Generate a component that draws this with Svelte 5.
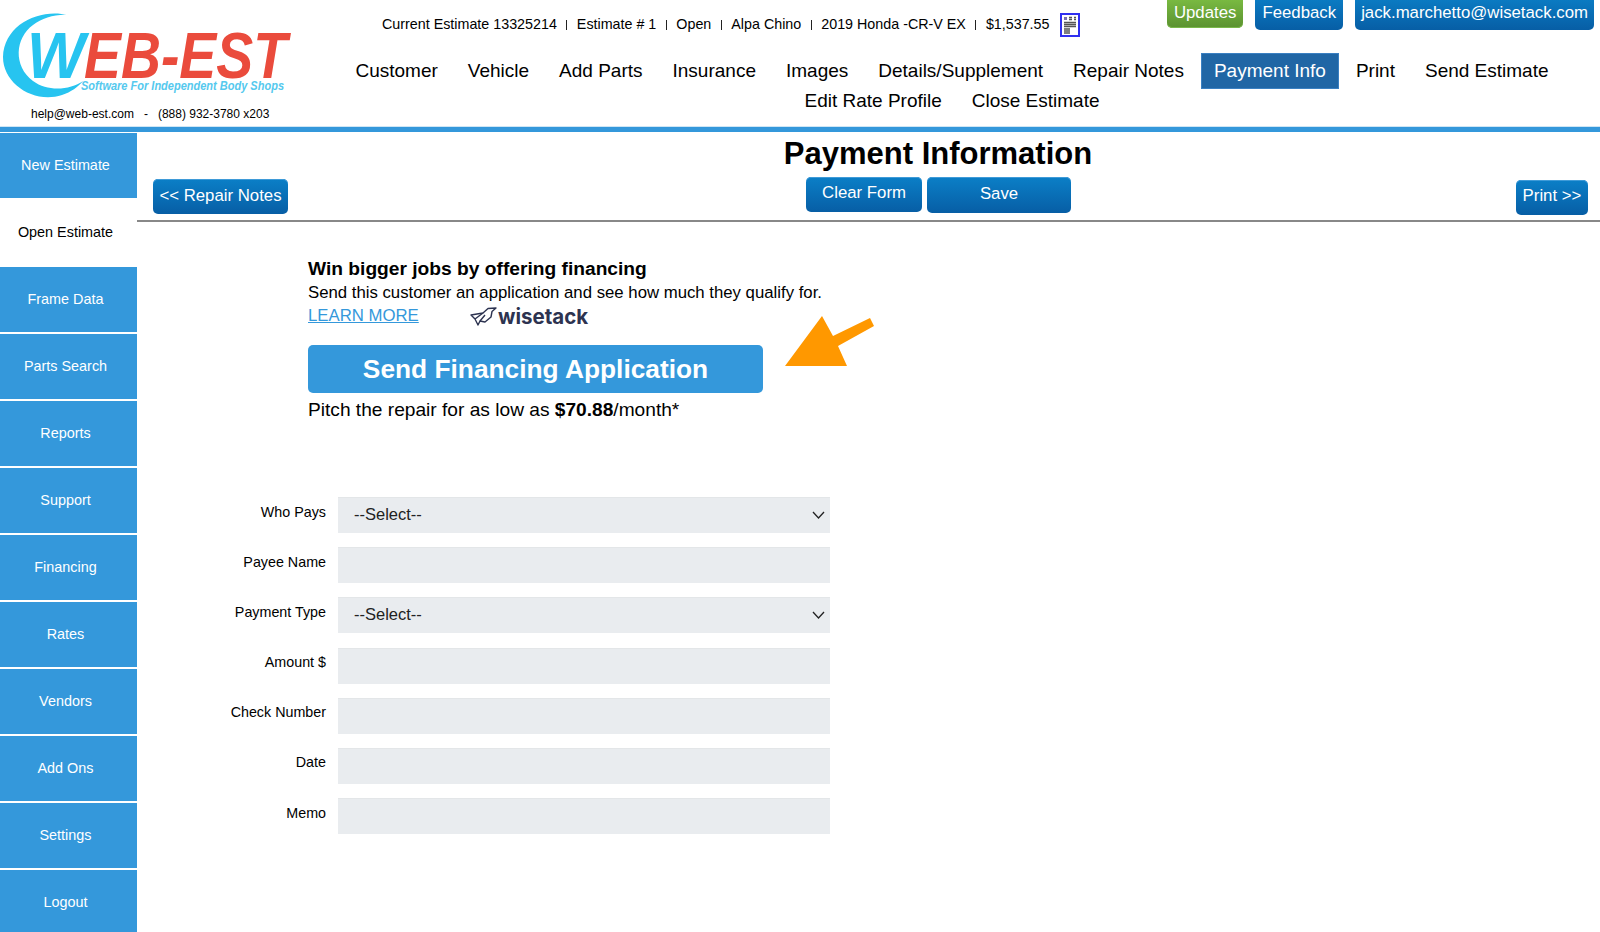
<script lang="ts">
  const summary = ['Current Estimate 13325214', 'Estimate # 1', 'Open', 'Alpa Chino', '2019 Honda -CR-V EX', '$1,537.55'];
  const nav = ['Customer', 'Vehicle', 'Add Parts', 'Insurance', 'Images', 'Details/Supplement', 'Repair Notes', 'Payment Info', 'Print', 'Send Estimate', 'Edit Rate Profile', 'Close Estimate'];
  const side = ['New Estimate', 'Open Estimate', 'Frame Data', 'Parts Search', 'Reports', 'Support', 'Financing', 'Rates', 'Vendors', 'Add Ons', 'Settings', 'Logout'];
  const fields = [
    { label: 'Who Pays', select: true },
    { label: 'Payee Name' },
    { label: 'Payment Type', select: true },
    { label: 'Amount $' },
    { label: 'Check Number' },
    { label: 'Date' },
    { label: 'Memo' },
  ];
</script>

<div class="page">
  <header class="header">
    <div class="brand">
      <svg class="logo" width="300" height="107" viewBox="0 0 300 107">
        <path d="M68 15 C40 8 4 24 3 57 C3 84 34 104 62 95 C71 92 78 87 83 81 C70 90 48 92 33 81 C13 66 15 38 33 25 C42 18 56 14 68 15 Z" fill="#27c4f0" />
        <text x="27" y="78" class="logo-w" textLength="58" lengthAdjust="spacingAndGlyphs">W</text>
        <text x="84" y="78" class="logo-red" textLength="203" lengthAdjust="spacingAndGlyphs">EB-EST</text>
        <text x="81" y="90" class="logo-tag" textLength="203" lengthAdjust="spacingAndGlyphs">Software For Independent Body Shops</text>
      </svg>
      <div class="contact">help@web-est.com<span class="dash">-</span>(888) 932-3780 x203</div>
    </div>

    <div class="head-main">
      <div class="topline">
        <div class="summary">
          {#each summary as s, i}
            {#if i > 0}<i class="pipe"></i>{/if}<span>{s}</span>
          {/each}
          <svg class="doc" width="20" height="24" viewBox="0 0 20 24">
            <rect x="1" y="1" width="18" height="22" fill="#fff" stroke="#3030f0" stroke-width="2" />
            <rect x="4" y="4" width="3" height="3" fill="#7a6fb0" />
            <path d="M9 4.5h3M9 6.5h3M14 4.5h2M14 6.5h2" stroke="#555" stroke-width="1.3" />
            <path d="M4 9.5h12M4 11.5h12M4 13.5h12M4 16h6M4 18h6M4 20h6" stroke="#555" stroke-width="1.3" />
          </svg>
        </div>
        <div class="top-btns">
          <button class="btn green">Updates</button>
          <button class="btn">Feedback</button>
          <button class="btn email">jack.marchetto@wisetack.com</button>
        </div>
      </div>
      <nav class="nav">
        {#each nav as item}
          <a href="#top" class:active={item === 'Payment Info'}>{item}</a>
        {/each}
      </nav>
    </div>
  </header>
  <div class="rule"></div>

  <div class="body">
    <aside class="sidebar">
      {#each side as item}
        <a href="#top" class:current={item === 'Open Estimate'}>{item}</a>
      {/each}
    </aside>

    <main class="content">
      <h1>Payment Information</h1>
      <div class="toolbar">
        <button class="btn back">&lt;&lt; Repair Notes</button>
        <div class="center-btns">
          <button class="btn clear">Clear Form</button>
          <button class="btn save">Save</button>
        </div>
        <button class="btn next">Print &gt;&gt;</button>
      </div>

      <section class="promo">
        <h2>Win bigger jobs by offering financing</h2>
        <p>Send this customer an application and see how much they qualify for.</p>
        <div class="learn">
          <a href="#top">LEARN MORE</a>
          <span class="wisetack">
            <svg width="27" height="19" viewBox="0 0 27 19" fill="none" stroke="#2d3350" stroke-width="1.4" stroke-linejoin="round">
              <path d="M1 8 L13 6 L18 1.5 L26 1 L22 4.5 L21 10 L15 15 L10 14 L8 18 L5 12 Z" />
              <path d="M5 12 L13 6 M10 14 L15 8" />
            </svg>
            <b>wisetack</b>
          </span>
        </div>
        <button class="send">Send Financing Application</button>
        <p class="pitch">Pitch the repair for as low as <b>$70.88</b>/month*</p>
        <svg class="arrow" width="92" height="52" viewBox="0 0 92 52">
          <path d="M37 0 L0 50 L62 50 L53 30 L89 10 L85 2 L48 20 Z" fill="#ff9800" />
        </svg>
      </section>

      <form class="form">
        {#each fields as f}
          <label class="field">
            <span>{f.label}</span>
            {#if f.select}
              <div class="select-wrap">
                <select><option>--Select--</option></select>
                <svg width="13" height="8" viewBox="0 0 13 8" fill="none" stroke="#222" stroke-width="1.3"><path d="M1 1 L6.5 7 L12 1" /></svg>
              </div>
            {:else}
              <input type="text" />
            {/if}
          </label>
        {/each}
      </form>
    </main>
  </div>
</div>

<style>
  :global(body) {
    margin: 0;
    overflow: hidden;
    background: #fff;
  }
  .page {
    width: 1600px;
    height: 932px;
    overflow: hidden;
    font-family: "Liberation Sans", Arial, sans-serif;
    color: #000;
  }
  .header {
    display: flex;
    height: 126px;
    overflow: hidden;
  }
  .brand {
    width: 330px;
    flex: none;
  }
  .logo {
    display: block;
  }
  .logo-w,
  .logo-red {
    font: italic bold 65px "Liberation Sans", Arial, sans-serif;
  }
  .logo-w {
    fill: #27c4f0;
  }
  .logo-red {
    fill: #ea4b3c;
  }
  .logo-tag {
    font: italic bold 12px "Liberation Sans", Arial, sans-serif;
    fill: #55c9ee;
  }
  .contact {
    font-size: 12px;
    line-height: 14px;
    padding-left: 31px;
  }
  .dash {
    margin: 0 10px;
  }
  .head-main {
    flex: 1;
    min-width: 0;
  }
  .topline {
    display: flex;
    justify-content: space-between;
    height: 56px;
  }
  .summary {
    display: flex;
    align-items: flex-start;
    padding: 16px 0 0 52px;
    font-size: 14.3px;
    line-height: 17px;
  }
  .pipe {
    width: 1px;
    height: 10px;
    background: #222;
    margin: 4px 9.5px 0;
  }
  .doc {
    margin: -3px 0 0 10px;
  }
  .top-btns {
    display: flex;
    gap: 12px;
    align-items: flex-start;
    padding-right: 6px;
  }
  .btn {
    border: none;
    border-radius: 5px;
    color: #fff;
    font-family: inherit;
    font-size: 16.8px;
    padding: 0 7px;
    height: 35px;
    background: linear-gradient(#0b7fc7, #075ea5);
    box-shadow: inset 0 1px 0 #3f9bd8;
  }
  .top-btns .btn {
    margin-top: -5px;
  }
  .top-btns .email {
    padding: 0 6px;
  }
  .top-btns .green {
    height: 33px;
    padding: 2px 7px 0;
    background: linear-gradient(#7ec044, #5b9230);
    box-shadow: inset 0 -1px 0 #7ab84a;
  }
  .nav {
    display: flex;
    flex-wrap: wrap;
    justify-content: center;
    padding-right: 26px;
    font-size: 19px;
    line-height: 30px;
  }
  .nav a {
    color: #000;
    text-decoration: none;
    padding: 3px 13px;
    margin: -3px 2px;
  }
  .nav a.active {
    background: #2066a5;
    color: #fff;
    box-shadow: inset 0 0 0 1px #3a80c2;
  }
  .rule {
    height: 5px;
    background: #3498db;
    border-top: 1px solid #cfe6f5;
    margin-bottom: 1px;
  }
  .body {
    display: flex;
  }
  .sidebar {
    width: 137px;
    flex: none;
    display: flex;
    flex-direction: column;
    gap: 2px;
  }
  .sidebar a {
    height: 65px;
    line-height: 65px;
    padding-right: 6px;
    text-align: center;
    background: #3498db;
    color: #fff;
    font-size: 14.4px;
    text-decoration: none;
  }
  .sidebar a.current {
    background: #fff;
    color: #000;
  }
  .content {
    flex: 1;
    min-width: 0;
    position: relative;
  }
  h1 {
    margin: 0;
    height: 44px;
    line-height: 41px;
    padding-left: 139px;
    text-align: center;
    font-size: 31px;
    font-weight: 700;
  }
  .toolbar {
    display: grid;
    grid-template-columns: 653px 265px 1fr;
    height: 43px;
    padding: 0 12px 0 16px;
    border-bottom: 2px solid #888;
  }
  .back {
    justify-self: start;
    margin-top: 2px;
    width: 135px;
    padding: 0 0 2px;
  }
  .next {
    justify-self: end;
    margin-top: 3px;
    width: 72px;
    padding: 0 0 3px;
  }
  .center-btns {
    display: flex;
    gap: 5px;
  }
  .clear {
    width: 116px;
    padding: 0 0 3px;
  }
  .save {
    width: 144px;
    height: 36px;
    padding: 0 0 3px;
  }
  .promo {
    position: relative;
    padding: 36px 0 0 171px;
  }
  h2 {
    margin: 0;
    font-size: 19.2px;
    line-height: 22px;
    font-weight: 700;
  }
  .promo p {
    margin: 2px 0 0;
    font-size: 16.75px;
    line-height: 22px;
  }
  .learn {
    display: flex;
    align-items: center;
    box-sizing: border-box;
    height: 22px;
    padding-top: 2px;
    font-size: 16.75px;
  }
  .learn a {
    color: #3498db;
    width: 162px;
  }
  .wisetack {
    display: flex;
    align-items: center;
    gap: 1px;
    color: #2d3350;
    font: 700 20.5px Inter, sans-serif;
  }
  .wisetack b {
    font-weight: 700;
  }
  .send {
    display: block;
    margin-top: 19px;
    width: 455px;
    height: 48px;
    border: none;
    border-radius: 5px;
    background: #3498db;
    color: #fff;
    font: bold 26.3px "Liberation Sans", Arial, sans-serif;
  }
  .promo .pitch {
    margin-top: 5px;
    font-size: 19.15px;
    line-height: 24px;
  }
  .arrow {
    position: absolute;
    left: 648px;
    top: 94px;
  }
  .form {
    display: flex;
    flex-direction: column;
    gap: 14.2px;
    margin-top: 75px;
  }
  .field {
    display: grid;
    grid-template-columns: 189px 492px;
    column-gap: 12px;
    align-items: center;
    height: 36px;
  }
  .field span {
    text-align: right;
    font-size: 14.3px;
    padding-bottom: 7px;
  }
  .field input,
  .field select {
    display: block;
    width: 100%;
    height: 36px;
    box-sizing: border-box;
    border: none;
    border-top: 1px solid #e3e6e8;
    border-radius: 0;
    background: #e9ecef;
    padding: 0 16px 4px;
    font: 16.5px "Liberation Sans", Arial, sans-serif;
    color: #222;
    appearance: none;
  }
  .select-wrap {
    position: relative;
  }
  .select-wrap svg {
    position: absolute;
    right: 5px;
    top: 14px;
  }
</style>
